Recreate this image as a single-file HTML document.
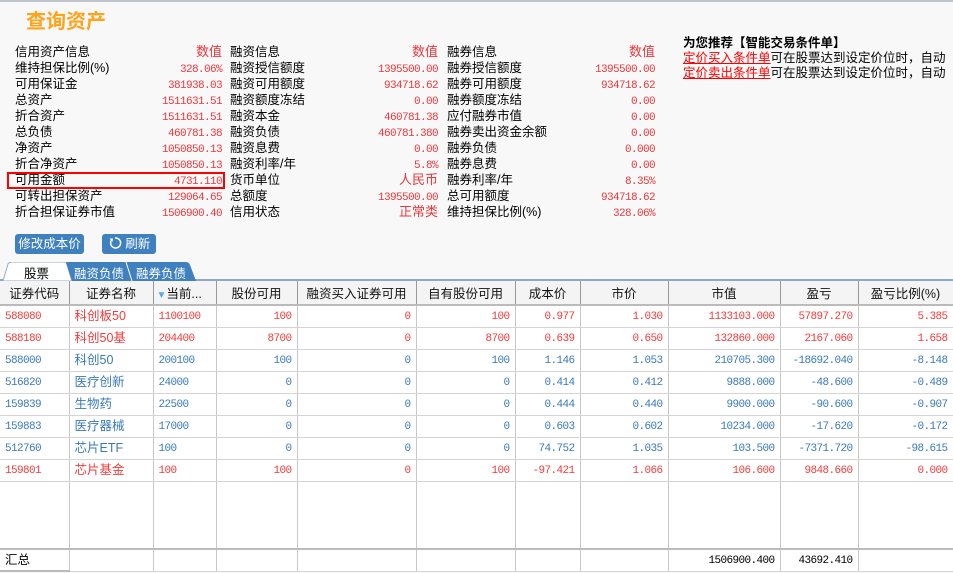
<!DOCTYPE html>
<html><head><meta charset="utf-8"><style>
*{margin:0;padding:0;box-sizing:border-box}
body{width:953px;height:573px;overflow:hidden;background:#f8f8f8;font-family:"Liberation Sans","Noto Sans CJK SC",sans-serif;position:relative;color:#000}
.a{position:absolute;white-space:nowrap}
.t{font-size:12.5px;line-height:16px}
.m{font-family:"Liberation Mono","Noto Sans CJK SC",monospace;font-size:11px;letter-spacing:-0.6px}
.m span{font-family:"Liberation Sans","Noto Sans CJK SC",sans-serif;font-size:13px;letter-spacing:0;display:inline-block;height:16px;line-height:16px;vertical-align:top;position:relative;top:-2px}
.r{color:#e8383c}
.v{text-align:right}
table{position:absolute;left:0;top:281px;border-collapse:collapse;table-layout:fixed;width:953px;background:#fff;font-size:11px;letter-spacing:-0.6px;font-family:"Liberation Mono","Noto Sans CJK SC",monospace}
td,th{border-right:1px solid #c8c8c8;border-bottom:1px solid #d4d4d4;height:22px;padding:2px 5px 0;white-space:nowrap;overflow:hidden;vertical-align:middle}
th{background:#f4f4f4;font-weight:normal;font-size:12.5px;letter-spacing:0;height:24px;padding:0 5px;border-right:1px solid #999;border-bottom:2px solid #bbb;color:#111;font-family:"Liberation Sans","Noto Sans CJK SC",sans-serif}
td{text-align:right}
td.l{text-align:left}
td.n{font-family:"Liberation Sans","Noto Sans CJK SC",sans-serif;font-size:12.5px;letter-spacing:0;line-height:14px;padding-top:0}
tr.R td{color:#f03c3c}
tr.B td{color:#3a7ab8}
.btn{position:absolute;background:#3f80bf;color:#fff;font-size:12.5px;border-radius:3px;height:20px;line-height:20px;text-align:center}
</style></head><body>
<div class="a" style="left:0;top:0;width:953px;height:2px;background:#c0c4cc"></div>
<div class="a" style="left:26px;top:9px;font-size:20px;font-weight:bold;color:#ffa31a;line-height:26px">查询资产</div>

<div class="a t" style="left:15px;top:44px">信用资产信息<br>维持担保比例(%)<br>可用保证金<br>总资产<br>折合资产<br>总负债<br>净资产<br>折合净资产<br>可用金额<br>可转出担保资产<br>折合担保证券市值</div>
<div class="a t m r v" style="right:731px;top:46px"><span>数值</span><br>328.06%<br>381938.03<br>1511631.51<br>1511631.51<br>460781.38<br>1050850.13<br>1050850.13<br>4731.110<br>129064.65<br>1506900.40</div>
<div class="a t" style="left:230px;top:44px">融资信息<br>融资授信额度<br>融资可用额度<br>融资额度冻结<br>融资本金<br>融资负债<br>融资息费<br>融资利率/年<br>货币单位<br>总额度<br>信用状态</div>
<div class="a t m r v" style="right:515px;top:46px"><span>数值</span><br>1395500.00<br>934718.62<br>0.00<br>460781.38<br>460781.380<br>0.00<br>5.8%<br><span>人民币</span><br>1395500.00<br><span>正常类</span></div>
<div class="a t" style="left:447px;top:44px">融券信息<br>融券授信额度<br>融券可用额度<br>融券额度冻结<br>应付融券市值<br>融券卖出资金余额<br>融券负债<br>融券息费<br>融券利率/年<br>总可用额度<br>维持担保比例(%)</div>
<div class="a t m r v" style="right:298px;top:46px"><span>数值</span><br>1395500.00<br>934718.62<br>0.00<br>0.00<br>0.00<br>0.000<br>0.00<br>8.35%<br>934718.62<br>328.06%</div>
<div class="a" style="left:7px;top:172px;width:218px;height:17px;border:2px solid #f00"></div>

<div class="a" style="left:683px;top:36px;font-size:12.5px;font-weight:bold;line-height:15px">为您推荐【智能交易条件单】</div>
<div class="a" style="left:683px;top:51px;font-size:12.5px;line-height:15px"><span style="color:#f00;text-decoration:underline">定价买入条件单</span>可在股票达到设定价位时，自动<br><span style="color:#f00;text-decoration:underline">定价卖出条件单</span>可在股票达到设定价位时，自动</div>

<div class="btn" style="left:15px;top:234px;width:69px">修改成本价</div>
<div class="btn" style="left:102px;top:234px;width:54px"><svg width="14" height="14" viewBox="0 0 14 14" style="vertical-align:-2px"><path d="M4 3.5A5 5 0 1 0 7 2" fill="none" stroke="#fff" stroke-width="1.5"/><path d="M1.5 2.5L5 2.5L4.5 6Z" fill="#fff"/></svg> 刷新</div>

<div class="a" style="left:0;top:279px;width:953px;height:2px;background:#8fa8c8"></div>
<svg class="a" style="left:0;top:262px" width="200" height="19"><path d="M3 19L8 2Q9 0 12 0L66 0L72 19Z" fill="#fff" stroke="#9ab"/><path d="M66 0L126 0L132 19L72 19Z" fill="#3f80bf"/><path d="M126 0L186 0Q189 0 190 3L196 19L132 19Z" fill="#3f80bf"/><path d="M126 0L132 19" stroke="#fff"/></svg>
<div class="a" style="left:24px;top:263px;font-size:12.5px">股票</div>
<div class="a" style="left:74px;top:263px;font-size:12.5px;color:#fff">融资负债</div>
<div class="a" style="left:136px;top:263px;font-size:12.5px;color:#fff">融券负债</div>

<table>
<colgroup><col style="width:69px"><col style="width:84px"><col style="width:63px"><col style="width:81px"><col style="width:119px"><col style="width:99px"><col style="width:65px"><col style="width:88px"><col style="width:112px"><col style="width:78px"><col style="width:95px"></colgroup>
<tr><th>证券代码</th><th>证券名称</th><th style="text-align:left;padding-left:3px"><span style="color:#5aa8e8;font-size:10px">▼</span>当前...</th><th>股份可用</th><th>融资买入证券可用</th><th>自有股份可用</th><th>成本价</th><th>市价</th><th>市值</th><th>盈亏</th><th>盈亏比例(%)</th></tr>
<tr class="R"><td class="l">588080</td><td class="l n">科创板50</td><td class="l">1100100</td><td>100</td><td>0</td><td>100</td><td>0.977</td><td>1.030</td><td>1133103.000</td><td>57897.270</td><td>5.385</td></tr>
<tr class="R"><td class="l">588180</td><td class="l n">科创50基</td><td class="l">204400</td><td>8700</td><td>0</td><td>8700</td><td>0.639</td><td>0.650</td><td>132860.000</td><td>2167.060</td><td>1.658</td></tr>
<tr class="B"><td class="l">588000</td><td class="l n">科创50</td><td class="l">200100</td><td>100</td><td>0</td><td>100</td><td>1.146</td><td>1.053</td><td>210705.300</td><td>-18692.040</td><td>-8.148</td></tr>
<tr class="B"><td class="l">516820</td><td class="l n">医疗创新</td><td class="l">24000</td><td>0</td><td>0</td><td>0</td><td>0.414</td><td>0.412</td><td>9888.000</td><td>-48.600</td><td>-0.489</td></tr>
<tr class="B"><td class="l">159839</td><td class="l n">生物药</td><td class="l">22500</td><td>0</td><td>0</td><td>0</td><td>0.444</td><td>0.440</td><td>9900.000</td><td>-90.600</td><td>-0.907</td></tr>
<tr class="B"><td class="l">159883</td><td class="l n">医疗器械</td><td class="l">17000</td><td>0</td><td>0</td><td>0</td><td>0.603</td><td>0.602</td><td>10234.000</td><td>-17.620</td><td>-0.172</td></tr>
<tr class="B"><td class="l">512760</td><td class="l n">芯片ETF</td><td class="l">100</td><td>0</td><td>0</td><td>0</td><td>74.752</td><td>1.035</td><td>103.500</td><td>-7371.720</td><td>-98.615</td></tr>
<tr class="R"><td class="l">159801</td><td class="l n">芯片基金</td><td class="l">100</td><td>100</td><td>0</td><td>100</td><td>-97.421</td><td>1.066</td><td>106.600</td><td>9848.660</td><td>0.000</td></tr>
<tr><td style="height:68px;border-bottom:2px solid #bbb"></td><td style="border-bottom:2px solid #bbb"></td><td style="border-bottom:2px solid #bbb"></td><td style="border-bottom:2px solid #bbb"></td><td style="border-bottom:2px solid #bbb"></td><td style="border-bottom:2px solid #bbb"></td><td style="border-bottom:2px solid #bbb"></td><td style="border-bottom:2px solid #bbb"></td><td style="border-bottom:2px solid #bbb"></td><td style="border-bottom:2px solid #bbb"></td><td style="border-bottom:2px solid #bbb"></td></tr>
<tr><td class="l n" style="height:20px;border-bottom:2px solid #bbb">汇总</td><td></td><td></td><td></td><td></td><td></td><td></td><td></td><td>1506900.400</td><td>43692.410</td><td></td></tr>
</table>
</body></html>
